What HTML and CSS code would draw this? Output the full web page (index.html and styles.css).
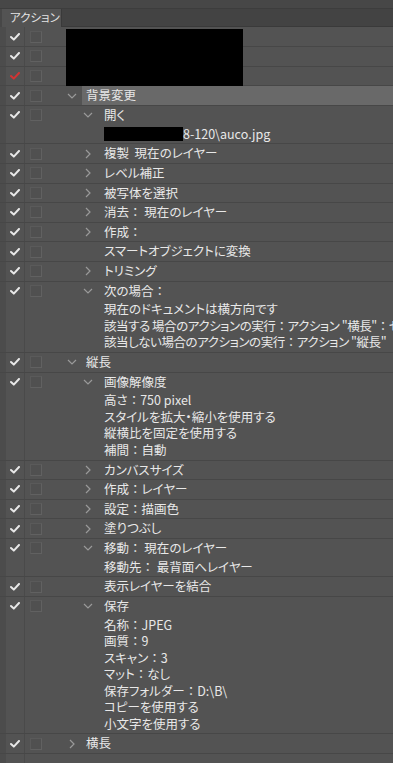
FILE: index.html
```html
<!DOCTYPE html>
<html lang="ja">
<head>
<meta charset="utf-8">
<title>アクション</title>
<link rel="stylesheet" href="styles.css">
</head>
<body>
<div class="panel">
  <div class="topstrip"></div>
  <div class="tabs">
    <div class="tab">アクション</div>
    <div class="tabfill"></div>
  </div>
  <div class="list">
    <div class="redact-big"></div>

    <div class="row"><div class="ck"><svg class="chk" viewBox="0 0 10 8"><polyline points="1,4 3.8,6.6 9,1"/></svg></div><div class="bx"><span class="box"></span></div><div class="ct"><div class="main"></div></div></div>
    <div class="row"><div class="ck"><svg class="chk" viewBox="0 0 10 8"><polyline points="1,4 3.8,6.6 9,1"/></svg></div><div class="bx"><span class="box"></span></div><div class="ct"><div class="main"></div></div></div>
    <div class="row"><div class="ck"><svg class="chk red" viewBox="0 0 10 8"><polyline points="1,4 3.8,6.6 9,1"/></svg></div><div class="bx"><span class="box"></span></div><div class="ct"><div class="main"></div></div></div>

    <div class="row"><div class="ck"><svg class="chk" viewBox="0 0 10 8"><polyline points="1,4 3.8,6.6 9,1"/></svg></div><div class="bx"><span class="box"></span></div><div class="ct"><div class="main l1"><span class="tog"><svg class="down" viewBox="0 0 10 6"><polyline points="1,1 5,5 9,1"/></svg></span><span class="label hl">背景変更</span></div></div></div>

    <div class="row"><div class="ck"><svg class="chk" viewBox="0 0 10 8"><polyline points="1,4 3.8,6.6 9,1"/></svg></div><div class="bx"><span class="box"></span></div><div class="ct"><div class="main l2"><span class="tog"><svg class="down" viewBox="0 0 10 6"><polyline points="1,1 5,5 9,1"/></svg></span><span class="label">開く</span></div><div class="det"><div class="dl"><span class="redact-path"></span>8-120\auco.jpg</div></div></div></div>

    <div class="row"><div class="ck"><svg class="chk" viewBox="0 0 10 8"><polyline points="1,4 3.8,6.6 9,1"/></svg></div><div class="bx"><span class="box"></span></div><div class="ct"><div class="main l2"><span class="tog"><svg class="right" viewBox="0 0 6 10"><polyline points="1,1 5,5 1,9"/></svg></span><span class="label">複製&nbsp;&nbsp;現在のレイヤー</span></div></div></div>
    <div class="row"><div class="ck"><svg class="chk" viewBox="0 0 10 8"><polyline points="1,4 3.8,6.6 9,1"/></svg></div><div class="bx"><span class="box"></span></div><div class="ct"><div class="main l2"><span class="tog"><svg class="right" viewBox="0 0 6 10"><polyline points="1,1 5,5 1,9"/></svg></span><span class="label">レベル補正</span></div></div></div>
    <div class="row"><div class="ck"><svg class="chk" viewBox="0 0 10 8"><polyline points="1,4 3.8,6.6 9,1"/></svg></div><div class="bx"><span class="box"></span></div><div class="ct"><div class="main l2"><span class="tog"><svg class="right" viewBox="0 0 6 10"><polyline points="1,1 5,5 1,9"/></svg></span><span class="label">被写体を選択</span></div></div></div>
    <div class="row"><div class="ck"><svg class="chk" viewBox="0 0 10 8"><polyline points="1,4 3.8,6.6 9,1"/></svg></div><div class="bx"><span class="box"></span></div><div class="ct"><div class="main l2"><span class="tog"><svg class="right" viewBox="0 0 6 10"><polyline points="1,1 5,5 1,9"/></svg></span><span class="label">消去<span class="cl">：</span>&nbsp;現在のレイヤー</span></div></div></div>
    <div class="row"><div class="ck"><svg class="chk" viewBox="0 0 10 8"><polyline points="1,4 3.8,6.6 9,1"/></svg></div><div class="bx"><span class="box"></span></div><div class="ct"><div class="main l2"><span class="tog"><svg class="right" viewBox="0 0 6 10"><polyline points="1,1 5,5 1,9"/></svg></span><span class="label">作成<span class="cl">：</span></span></div></div></div>
    <div class="row"><div class="ck"><svg class="chk" viewBox="0 0 10 8"><polyline points="1,4 3.8,6.6 9,1"/></svg></div><div class="bx"><span class="box"></span></div><div class="ct"><div class="main l2"><span class="tog"></span><span class="label">スマートオブジェクトに変換</span></div></div></div>
    <div class="row"><div class="ck"><svg class="chk" viewBox="0 0 10 8"><polyline points="1,4 3.8,6.6 9,1"/></svg></div><div class="bx"><span class="box"></span></div><div class="ct"><div class="main l2"><span class="tog"><svg class="right" viewBox="0 0 6 10"><polyline points="1,1 5,5 1,9"/></svg></span><span class="label">トリミング</span></div></div></div>

    <div class="row"><div class="ck"><svg class="chk" viewBox="0 0 10 8"><polyline points="1,4 3.8,6.6 9,1"/></svg></div><div class="bx"><span class="box"></span></div><div class="ct"><div class="main l2"><span class="tog"><svg class="down" viewBox="0 0 10 6"><polyline points="1,1 5,5 9,1"/></svg></span><span class="label">次の場合<span class="cl">：</span></span></div><div class="det"><div class="dl">現在のドキュメントは横方向です</div><div class="dl tight">該当する 場合のアクションの実行<span class="cl">：</span>アクション "横長"<span class="cl">：</span>セット "背景"</div><div class="dl tight">該当しない場合のアクションの実行<span class="cl">：</span>アクション "縦長"</div></div></div></div>

    <div class="row"><div class="ck"><svg class="chk" viewBox="0 0 10 8"><polyline points="1,4 3.8,6.6 9,1"/></svg></div><div class="bx"><span class="box"></span></div><div class="ct"><div class="main l1"><span class="tog"><svg class="down" viewBox="0 0 10 6"><polyline points="1,1 5,5 9,1"/></svg></span><span class="label">縦長</span></div></div></div>

    <div class="row"><div class="ck"><svg class="chk" viewBox="0 0 10 8"><polyline points="1,4 3.8,6.6 9,1"/></svg></div><div class="bx"><span class="box"></span></div><div class="ct"><div class="main l2"><span class="tog"><svg class="down" viewBox="0 0 10 6"><polyline points="1,1 5,5 9,1"/></svg></span><span class="label">画像解像度</span></div><div class="det"><div class="dl">高さ<span class="cl">：</span>750 pixel</div><div class="dl">スタイルを拡大・縮小を使用する</div><div class="dl">縦横比を固定を使用する</div><div class="dl">補間<span class="cl">：</span>自動</div></div></div></div>

    <div class="row"><div class="ck"><svg class="chk" viewBox="0 0 10 8"><polyline points="1,4 3.8,6.6 9,1"/></svg></div><div class="bx"><span class="box"></span></div><div class="ct"><div class="main l2"><span class="tog"><svg class="right" viewBox="0 0 6 10"><polyline points="1,1 5,5 1,9"/></svg></span><span class="label">カンバスサイズ</span></div></div></div>
    <div class="row"><div class="ck"><svg class="chk" viewBox="0 0 10 8"><polyline points="1,4 3.8,6.6 9,1"/></svg></div><div class="bx"><span class="box"></span></div><div class="ct"><div class="main l2"><span class="tog"><svg class="right" viewBox="0 0 6 10"><polyline points="1,1 5,5 1,9"/></svg></span><span class="label">作成<span class="cl">：</span>レイヤー</span></div></div></div>
    <div class="row"><div class="ck"><svg class="chk" viewBox="0 0 10 8"><polyline points="1,4 3.8,6.6 9,1"/></svg></div><div class="bx"><span class="box"></span></div><div class="ct"><div class="main l2"><span class="tog"><svg class="right" viewBox="0 0 6 10"><polyline points="1,1 5,5 1,9"/></svg></span><span class="label">設定<span class="cl">：</span>描画色</span></div></div></div>
    <div class="row"><div class="ck"><svg class="chk" viewBox="0 0 10 8"><polyline points="1,4 3.8,6.6 9,1"/></svg></div><div class="bx"><span class="box"></span></div><div class="ct"><div class="main l2"><span class="tog"><svg class="right" viewBox="0 0 6 10"><polyline points="1,1 5,5 1,9"/></svg></span><span class="label">塗りつぶし</span></div></div></div>

    <div class="row"><div class="ck"><svg class="chk" viewBox="0 0 10 8"><polyline points="1,4 3.8,6.6 9,1"/></svg></div><div class="bx"><span class="box"></span></div><div class="ct"><div class="main l2"><span class="tog"><svg class="down" viewBox="0 0 10 6"><polyline points="1,1 5,5 9,1"/></svg></span><span class="label">移動<span class="cl">：</span>&nbsp;現在のレイヤー</span></div><div class="det"><div class="dl">移動先<span class="cl">：</span>&nbsp;最背面へレイヤー</div></div></div></div>

    <div class="row"><div class="ck"><svg class="chk" viewBox="0 0 10 8"><polyline points="1,4 3.8,6.6 9,1"/></svg></div><div class="bx"><span class="box"></span></div><div class="ct"><div class="main l2"><span class="tog"></span><span class="label">表示レイヤーを結合</span></div></div></div>

    <div class="row"><div class="ck"><svg class="chk" viewBox="0 0 10 8"><polyline points="1,4 3.8,6.6 9,1"/></svg></div><div class="bx"><span class="box"></span></div><div class="ct"><div class="main l2"><span class="tog"><svg class="down" viewBox="0 0 10 6"><polyline points="1,1 5,5 9,1"/></svg></span><span class="label">保存</span></div><div class="det"><div class="dl">名称<span class="cl">：</span>JPEG</div><div class="dl">画質<span class="cl">：</span>9</div><div class="dl">スキャン<span class="cl">：</span>3</div><div class="dl">マット<span class="cl">：</span>なし</div><div class="dl">保存フォルダー<span class="cl">：</span>D:\B\</div><div class="dl">コピーを使用する</div><div class="dl">小文字を使用する</div></div></div></div>

    <div class="row"><div class="ck"><svg class="chk" viewBox="0 0 10 8"><polyline points="1,4 3.8,6.6 9,1"/></svg></div><div class="bx"><span class="box"></span></div><div class="ct"><div class="main l1"><span class="tog"><svg class="right" viewBox="0 0 6 10"><polyline points="1,1 5,5 1,9"/></svg></span><span class="label">横長</span></div></div></div>
  </div>
</div>
</body>
</html>
```

FILE: styles.css
```css
* { box-sizing: border-box; }

html, body {
  margin: 0;
  padding: 0;
}

body {
  width: 393px;
  height: 763px;
  overflow: hidden;
  background: #535353;
  font-family: "Noto Sans CJK JP", "Noto Sans", sans-serif;
  font-feature-settings: "palt";
  font-size: 12.5px;
  color: #e8e8e8;
}

.panel {
  display: flex;
  flex-direction: column;
  height: 763px;
}

.topstrip {
  height: 9px;
  background: #474747;
  border-bottom: 1px solid #3d3d3d;
}

.tabs {
  display: flex;
  height: 18px;
}

.tab {
  width: 61px;
  flex: none;
  background: #535353;
  color: #e4e4e4;
  font-size: 11.5px;
  line-height: 17px;
  padding-left: 8px;
  white-space: nowrap;
  border-left: 2px solid #474747;
}

.tabfill {
  flex: 1;
  background: #434343;
  border-left: 1px solid #3a3a3a;
  border-bottom: 1px solid #3a3a3a;
}

.list {
  position: relative;
  flex: 1;
  padding-top: 0.5px;
  background:
    linear-gradient(to right, transparent 24px, #4a4a4a 24px, #4a4a4a 25px, transparent 25px),
    linear-gradient(to right, #4c4c4c 0, #4c4c4c 6px, transparent 6px),
    #535353;
}

.redact-big {
  position: absolute;
  left: 66px;
  top: 2px;
  width: 177px;
  height: 57px;
  background: #000;
  z-index: 2;
}

.row {
  display: grid;
  grid-template-columns: 24px 26px 1fr;
  border-bottom: 1px solid #474747;
}

.ck, .bx {
  height: 18.6px;
  display: flex;
  align-items: center;
}

.ck {
  padding-left: 10px;
}

.chk {
  width: 10px;
  height: 8px;
  fill: none;
  stroke: #e8e8e8;
  stroke-width: 2;
  stroke-linecap: round;
  stroke-linejoin: round;
}

.chk.red {
  stroke: #d23434;
}

.bx {
  padding-left: 6px;
}

.box {
  width: 12px;
  height: 12px;
  border: 1px solid #616161;
  border-top-color: #5a5a5a;
  border-left-color: #5a5a5a;
  background: #505050;
}

.ct {
  min-width: 0;
  overflow: hidden;
  white-space: nowrap;
}

.main {
  height: 18.6px;
  display: flex;
  align-items: center;
}

.tog {
  display: flex;
  align-items: center;
  flex: none;
  height: 100%;
}

.l1 .tog {
  margin-left: 17px;
  width: 19px;
}

.l2 .tog {
  margin-left: 33px;
  width: 21px;
}

.down {
  width: 10px;
  height: 6px;
  fill: none;
  stroke: #9a9a9a;
  stroke-width: 1.2;
}

.right {
  width: 6px;
  height: 10px;
  margin-left: 2px;
  fill: none;
  stroke: #9a9a9a;
  stroke-width: 1.2;
}

.label {
  flex: 1;
  height: 100%;
  display: flex;
  align-items: center;
  padding-left: 4px;
  margin-left: -4px;
  line-height: 1;
}

.label.hl {
  background: #696969;
}

.cl {
  font-feature-settings: normal;
}

.det {
  padding: 1.2px 0 1.2px 54px;
}

.dl {
  height: 16.5px;
  line-height: 16.5px;
}

.dl.tight {
  letter-spacing: -0.45px;
}

.redact-path {
  display: inline-block;
  width: 79px;
  height: 14px;
  background: #000;
  vertical-align: -2px;
}
```
